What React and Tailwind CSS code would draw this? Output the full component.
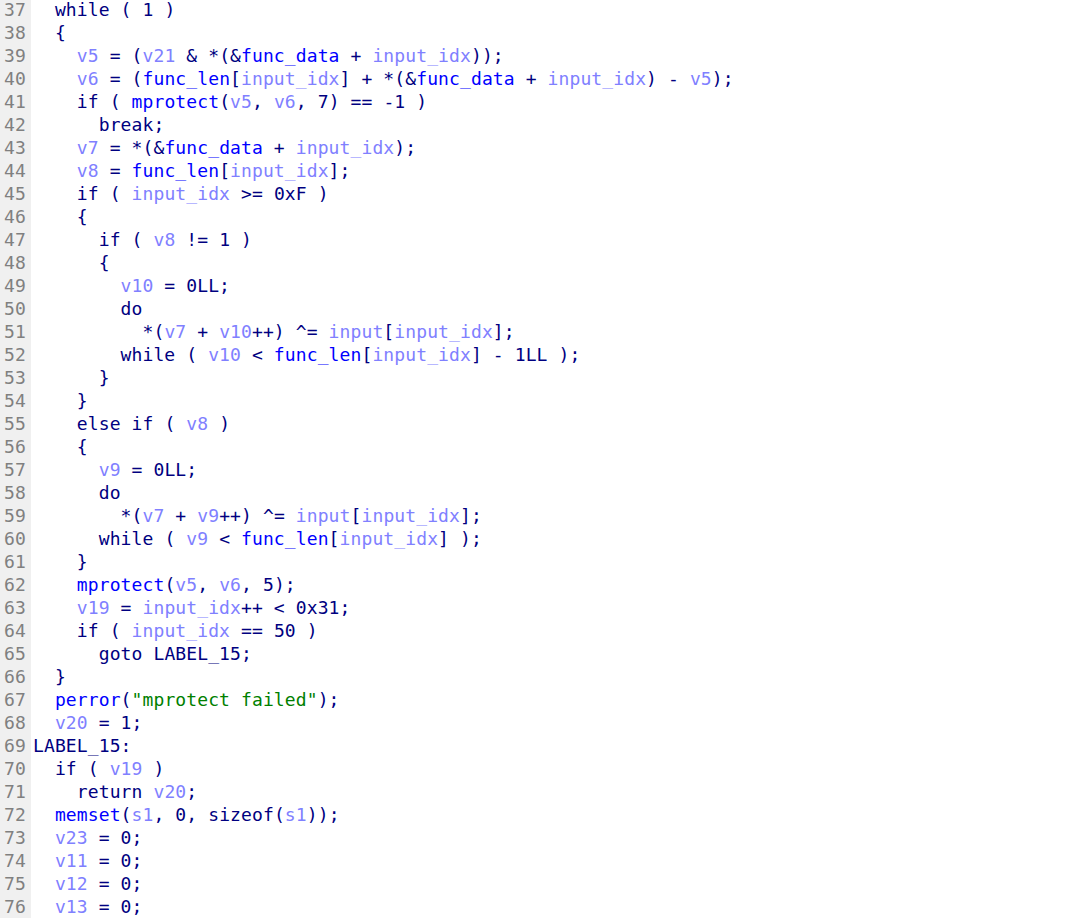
import React from 'react';

const lines = [
  '  while ( 1 )',
  '  {',
  '    v5 = (v21 & *(&func_data + input_idx));',
  '    v6 = (func_len[input_idx] + *(&func_data + input_idx) - v5);',
  '    if ( mprotect(v5, v6, 7) == -1 )',
  '      break;',
  '    v7 = *(&func_data + input_idx);',
  '    v8 = func_len[input_idx];',
  '    if ( input_idx >= 0xF )',
  '    {',
  '      if ( v8 != 1 )',
  '      {',
  '        v10 = 0LL;',
  '        do',
  '          *(v7 + v10++) ^= input[input_idx];',
  '        while ( v10 < func_len[input_idx] - 1LL );',
  '      }',
  '    }',
  '    else if ( v8 )',
  '    {',
  '      v9 = 0LL;',
  '      do',
  '        *(v7 + v9++) ^= input[input_idx];',
  '      while ( v9 < func_len[input_idx] );',
  '    }',
  '    mprotect(v5, v6, 5);',
  '    v19 = input_idx++ < 0x31;',
  '    if ( input_idx == 50 )',
  '      goto LABEL_15;',
  '  }',
  '  perror("mprotect failed");',
  '  v20 = 1;',
  'LABEL_15:',
  '  if ( v19 )',
  '    return v20;',
  '  memset(s1, 0, sizeof(s1));',
  '  v23 = 0;',
  '  v11 = 0;',
  '  v12 = 0;',
  '  v13 = 0;',
];

const blue = new Set(['func_data', 'func_len', 'mprotect', 'perror', 'memset']);
const navy = new Set(['while', 'if', 'break', 'do', 'else', 'return', 'goto', 'sizeof', 'LABEL_15']);

// split a line into coloured pieces, IDA style
const tokenize = (line) => {
  const out = [];
  const re = /("[^"]*")|([A-Za-z_][A-Za-z0-9_]*)|([0-9][0-9A-Za-z]*)|([^"A-Za-z0-9_]+)/g;
  let m;
  while ((m = re.exec(line))) {
    if (m[1]) out.push([m[1], 'text-[#008000]']);
    else if (m[2]) {
      if (blue.has(m[2])) out.push([m[2], 'text-[#0000ff]']);
      else if (navy.has(m[2])) out.push([m[2], 'text-[#000080]']);
      else out.push([m[2], 'text-[#8080ff]']);
    } else out.push([m[0], 'text-[#000080]']);
  }
  return out;
};

export default function App() {
  return (
    <div className="h-[920px] w-[1073px] overflow-hidden bg-white">
      <div
        className="flex -mt-[2.5px] text-[18px] tracking-[0.11px] leading-[23px] whitespace-pre"
        style={{ fontFamily: '"DejaVu Sans Mono", "Liberation Mono", monospace' }}
      >
        <div className="w-[31px] shrink-0 bg-[#f0f0f0] pr-[5px] text-right text-[#808080]">
          {lines.map((_, i) => (
            <div key={i} className="h-[23px]">{37 + i}</div>
          ))}
        </div>
        <div className="pl-[2px]">
          {lines.map((line, i) => (
            <div key={i} className="h-[23px]">
              {tokenize(line).map(([t, c], j) => (
                <span key={j} className={c}>{t}</span>
              ))}
            </div>
          ))}
        </div>
      </div>
    </div>
  );
}
